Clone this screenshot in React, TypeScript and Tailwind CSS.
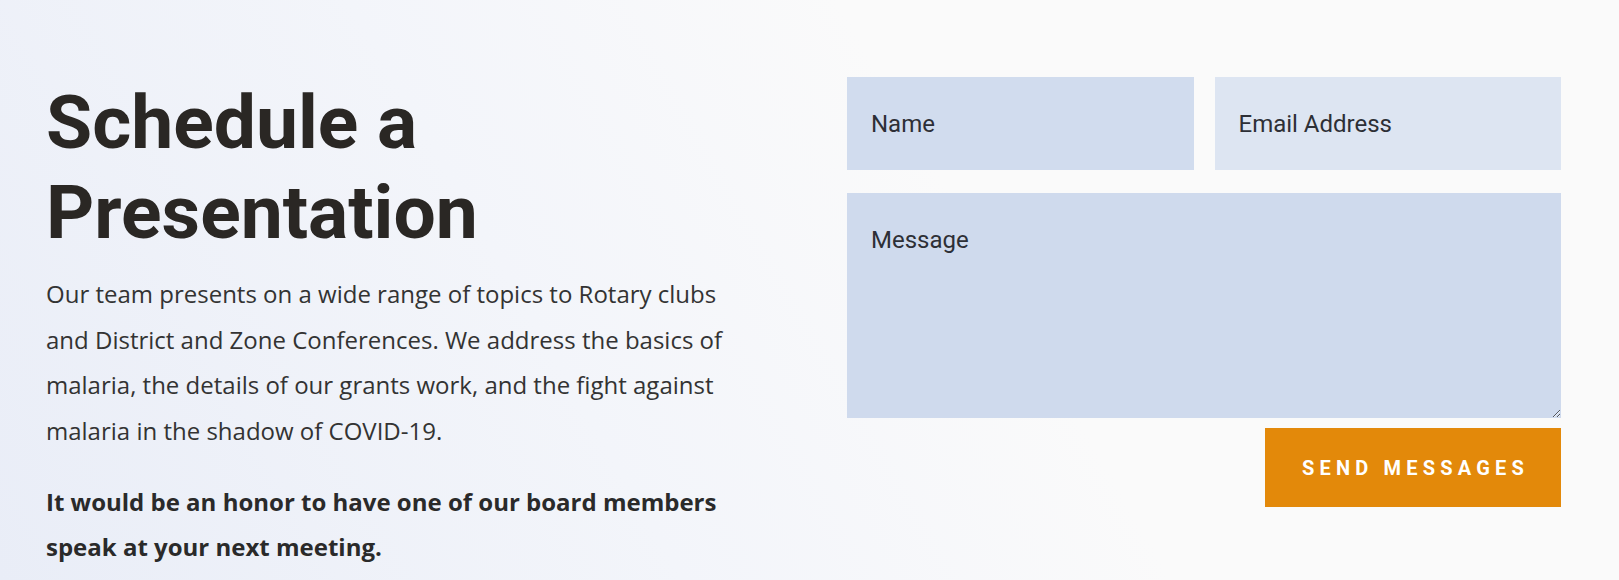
export default function App() {
  return (
    <div className="min-h-[580px] w-full bg-[linear-gradient(60deg,#e9edf7_0%,#f3f5fa_35%,#fafafa_60%)]">
      <section className="flex items-start pt-[77px]">
        <div className="w-[756px] shrink-0 pl-[46px]">
          <h1 className="font-['Roboto',sans-serif] text-[75px] font-bold leading-[90px] text-[#2a2724]">
            Schedule a
            <br />
            Presentation
          </h1>
          <p className="mt-[14px] font-['Open_Sans',sans-serif] text-[24px] leading-[1.9] text-[#333333]">
            Our team presents on a wide range of topics to Rotary clubs and District and Zone
            Conferences. We address the basics of malaria, the details of our grants work, and
            the fight against malaria in the shadow of COVID-19.
          </p>
          <p className="mt-[26px] font-['Open_Sans',sans-serif] text-[24px] font-bold leading-[1.88] text-[#2a2a2a]">
            It would be an honor to have one of our board members speak at your next meeting.
          </p>
        </div>

        <form
          className="ml-auto mr-[58px] flex w-[714px] flex-col"
          onSubmit={(e) => e.preventDefault()}
        >
          <div className="grid grid-cols-2 gap-[21px]">
            <input
              type="text"
              placeholder="Name"
              className="h-[93px] bg-[#d1dcee] px-6 font-['Roboto',sans-serif] text-[24px] text-[#2d2f36] outline-none placeholder:text-[#2d2f36]"
            />
            <input
              type="email"
              placeholder="Email Address"
              className="h-[93px] bg-[#dde5f2] px-6 font-['Roboto',sans-serif] text-[24px] text-[#2d2f36] outline-none placeholder:text-[#2d2f36]"
            />
          </div>
          <textarea
            placeholder="Message"
            className="mt-[23px] h-[225px] bg-[#cfdaed] px-6 py-[29px] font-['Roboto',sans-serif] text-[24px] leading-[1.5] text-[#2d2f36] outline-none placeholder:text-[#2d2f36]"
          />
          <button
            type="submit"
            className="ml-auto mt-[10px] flex h-[79px] w-[296px] items-center justify-center bg-[#e3890a] pl-[5px] font-['Roboto',sans-serif] text-[20px] font-bold uppercase tracking-[5.2px] text-white"
          >
            Send Messages
          </button>
        </form>
      </section>
    </div>
  );
}
